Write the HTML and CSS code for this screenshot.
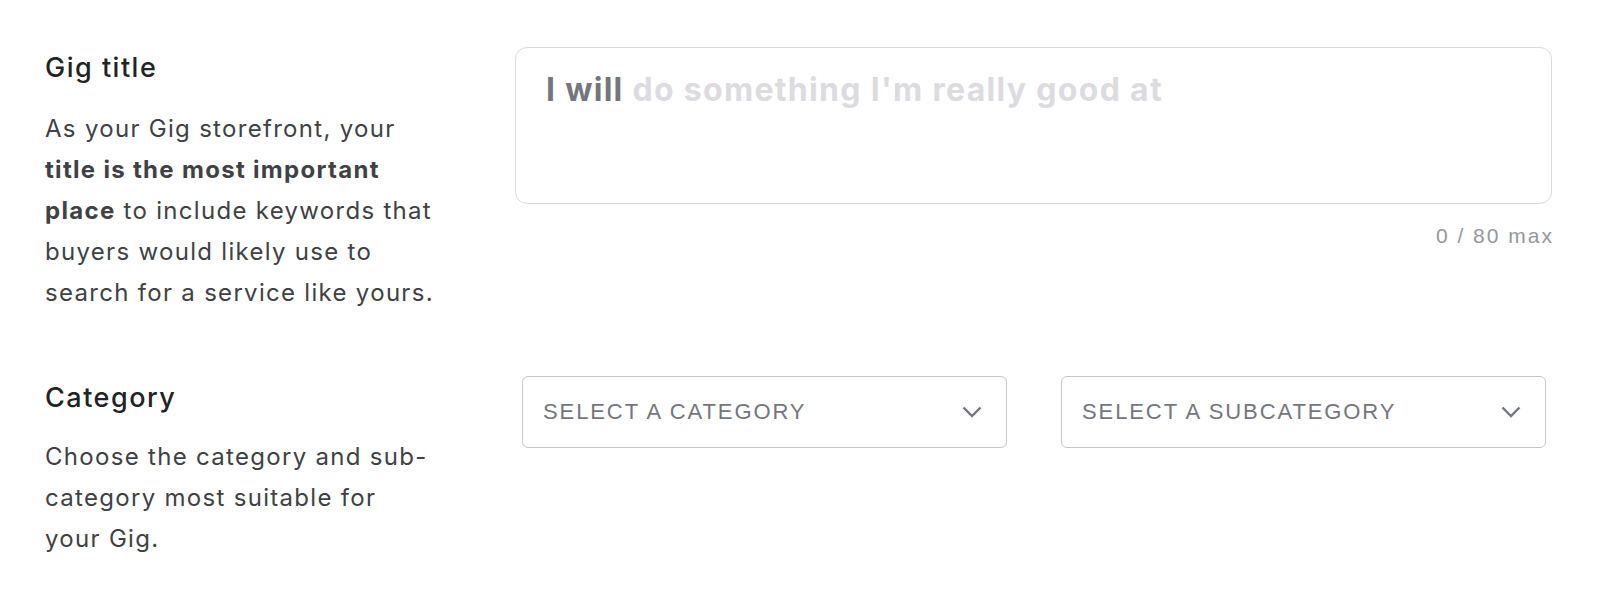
FILE: index.html
```html
<!DOCTYPE html>
<html lang="en">
<head>
<meta charset="utf-8">
<title>Gig overview</title>
<link rel="stylesheet" href="styles.css">
</head>
<body>
<main class="form">
  <section class="row row-title">
    <div class="info">
      <h3 class="label">Gig title</h3>
      <p class="desc">As your Gig storefront, your <b>title is the most important place</b> to include keywords that buyers would likely use to search for a service like yours.</p>
    </div>
    <div class="field">
      <div class="textarea"><span class="prefix">I will</span> <span class="placeholder">do something I'm really good at</span></div>
      <div class="counter">0 / 80 max</div>
    </div>
  </section>
  <section class="row row-cat">
    <div class="info">
      <h3 class="label">Category</h3>
      <p class="desc desc-narrow">Choose the category and sub-category most suitable for your Gig.</p>
    </div>
    <div class="field selects">
      <div class="select"><span>SELECT A CATEGORY</span>
        <svg class="chev" viewBox="0 0 20 12" width="20" height="12"><path d="M1.5 1.5 L10 10 L18.5 1.5" fill="none" stroke="#74767e" stroke-width="2.4"/></svg>
      </div>
      <div class="select"><span>SELECT A SUBCATEGORY</span>
        <svg class="chev" viewBox="0 0 20 12" width="20" height="12"><path d="M1.5 1.5 L10 10 L18.5 1.5" fill="none" stroke="#74767e" stroke-width="2.4"/></svg>
      </div>
    </div>
  </section>
</main>
</body>
</html>
```
FILE: styles.css
```css
html, body {
  margin: 0;
  padding: 0;
  background: #ffffff;
}
body {
  font-family: "Inter", "Noto Sans", sans-serif;
  color: #404145;
}
.form {
  padding: 47px 48px 0 45px;
  display: flex;
  flex-direction: column;
  gap: 63px;
}
.row {
  display: flex;
  gap: 60px;
}
.info {
  width: 410px;
  flex: none;
}
.label {
  margin: 0;
  padding-top: 5px;
  font-size: 27px;
  line-height: 32px;
  font-weight: 500;
  color: #222325;
  letter-spacing: 1.5px;
}
.desc {
  margin: 24px 0 0;
  max-width: 403px;
  font-size: 24px;
  line-height: 41px;
  color: #404145;
  letter-spacing: 1.3px;
}
.desc b {
  font-weight: 700;
  color: #404145;
}
.desc-narrow {
  max-width: 392px;
}
.row-cat .label {
  padding-top: 6px;
}
.row-cat .desc {
  margin-top: 22px;
}
.field {
  flex: 1;
}
.textarea {
  box-sizing: border-box;
  height: 157px;
  border: 1px solid #dadbdd;
  border-radius: 12px;
  padding: 22px 30px 18px;
  font-size: 32px;
  line-height: 40px;
  font-weight: 700;
  letter-spacing: 1.3px;
}
.prefix {
  color: #74767e;
}
.placeholder {
  color: #dcdbe0;
}
.counter {
  text-align: right;
  margin-top: 19px;
  font-family: "Liberation Sans", Arial, sans-serif;
  font-size: 21px;
  line-height: 26px;
  color: #95979d;
  letter-spacing: 2px;
  margin-right: -2px;
}
.selects {
  display: flex;
  gap: 54px;
  padding: 0 6px 0 7px;
}
.select {
  flex: 1;
  height: 72px;
  box-sizing: border-box;
  border: 1px solid #c5c6c9;
  border-radius: 6px;
  display: flex;
  align-items: center;
  justify-content: space-between;
  padding: 0 24px 0 20px;
  font-family: "Liberation Sans", Arial, sans-serif;
  font-size: 22px;
  color: #74767e;
  letter-spacing: 1.9px;
}
.chev {
  display: block;
  flex: none;
}
```
